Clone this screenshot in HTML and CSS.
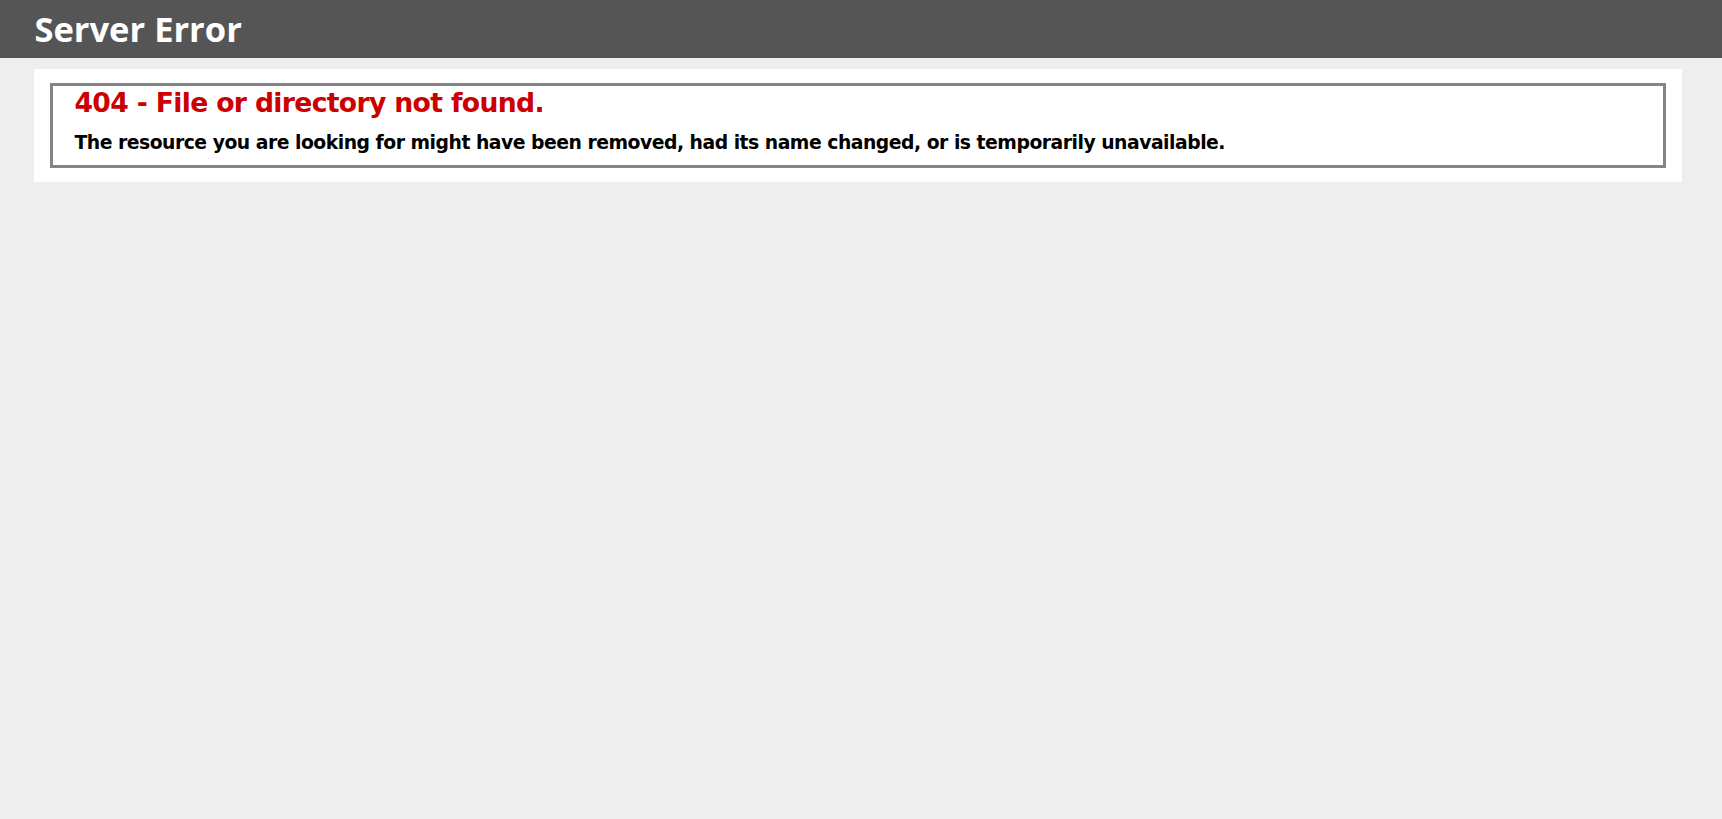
FILE: index.html
```html
<!DOCTYPE html>
<html lang="en">
<head>
<meta charset="utf-8">
<title>404 - File or directory not found.</title>
<link rel="stylesheet" href="styles.css">
</head>
<body>
<div class="header"><h1>Server Error</h1></div>
<div class="content">
  <div class="content-container">
    <fieldset class="box">
      <h2>404 - File or directory not found.</h2>
      <h3>The resource you are looking for might have been removed, had its name changed, or is temporarily unavailable.</h3>
    </fieldset>
  </div>
</div>
</body>
</html>
```
FILE: styles.css
```css
html, body {
  margin: 0;
  padding: 0;
}
body {
  font-size: 15.68px;
  font-family: "DejaVu Sans", Verdana, sans-serif;
  background: #eeeeee;
}
.header {
  width: 96%;
  padding: 8px 2%;
  background-color: #555555;
  color: #ffffff;
  font-family: "Open Sans", "Trebuchet MS", sans-serif;
}
.header h1 {
  margin: 0;
  font-size: 34.5px;
  line-height: 42px;
  font-weight: bold;
  color: #ffffff;
}
.content {
  margin: 0 0 0 2%;
}
.content-container {
  background: #ffffff;
  width: 96%;
  margin-top: 11px;
  padding: 14px;
}
.box {
  margin: 0 2px;
  padding: 1px 21px 12px 21px;
  border: 3px solid #858585;
  min-width: 0;
}
.box h2 {
  margin: 0;
  font-size: 26.66px;
  letter-spacing: -0.67px;
  color: #cc0000;
}
.box h3 {
  margin: 14px 0 0 0;
  font-size: 18.8px;
  letter-spacing: -0.49px;
  color: #000000;
}
```
